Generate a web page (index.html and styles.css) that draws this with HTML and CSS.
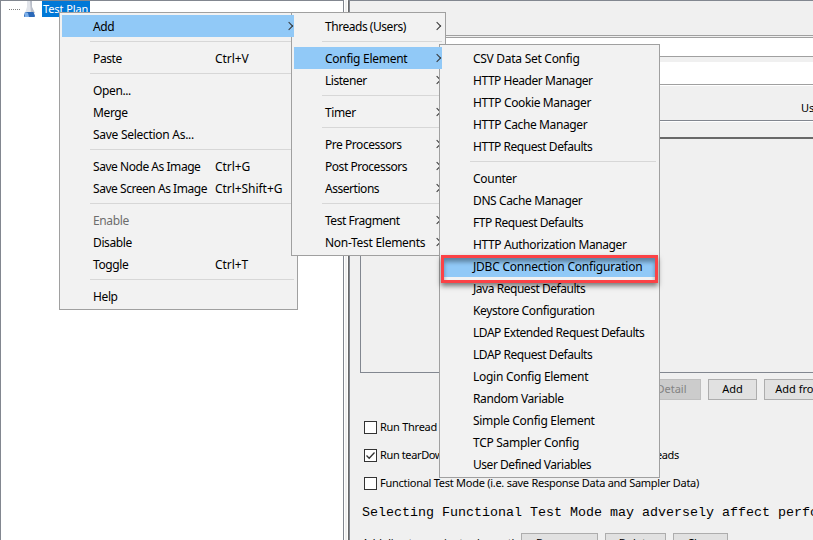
FILE: index.html
```
<!DOCTYPE html>
<html lang="en">
<head>
<meta charset="utf-8">
<title>Test Plan</title>
<link rel="stylesheet" href="styles.css">
</head>
<body>
<div class="app">
  <aside class="tree">
    <div class="node">
      <span class="branch"></span>
      <svg class="flask" width="14" height="17" viewBox="0 0 14 17"><path d="M5 0h5v6l3 9q0 1-1 1H3q-1 0-1-1L5 6z" fill="#e1e4ea"/><path d="M8 0h2v6l3 6H9z" fill="#b9bec9"/><path d="M3 11h8.500l1.500 4q0 1-1 1H3q-1 0-1-1z" fill="#2a68b8"/><path d="M3 11l3 1 1 4H3z" fill="#7db0ea"/></svg>
      <span class="selected">Test Plan</span>
    </div>
  </aside>
  <div class="divider"></div>
  <main class="panel">
    <div class="title-space"></div>
    <div class="field name"></div>
    <div class="field comments"></div>
    <div class="heading">User Defined Variables</div>
    <div class="table"><div class="table-head"></div></div>
    <div class="row-buttons"><button class="disabled">Detail</button><button class="add">Add</button><button class="clip">Add from Clipboard</button></div>
    <div class="checks">
      <label class="check"><i></i><span>Run Thread Groups consecutively</span></label>
      <label class="check"><i><svg width="13" height="13" viewBox="0 0 13 13"><path d="M2.500 6.500 5.200 9.300 10.500 3.500" fill="none" stroke="#333" stroke-width="1.300"/></svg></i><span class="narrow">Run tearDown Thread Groups after shutdown of main threads</span></label>
      <label class="check"><i></i><span>Functional Test Mode (i.e. save Response Data and Sampler Data)</span></label>
    </div>
    <p class="note">Selecting Functional Test Mode may adversely affect performance.</p>
    <div class="classpath"><span>Add directory or jar to classpath</span><button class="browse">Browse...</button><button class="delete">Delete</button><button class="clear">Clear</button></div>
  </main>
</div>

<nav class="menu root">
  <div class="item active"><span>Add</span><b class="arrow"></b></div>
  <hr>
  <div class="item"><span>Paste</span><kbd>Ctrl+V</kbd></div>
  <hr>
  <div class="item"><span>Open...</span></div>
  <div class="item"><span>Merge</span></div>
  <div class="item loose"><span>Save Selection As...</span></div>
  <hr>
  <div class="item tight"><span>Save Node As Image</span><kbd>Ctrl+G</kbd></div>
  <div class="item tight"><span>Save Screen As Image</span><kbd>Ctrl+Shift+G</kbd></div>
  <hr>
  <div class="item off"><span>Enable</span></div>
  <div class="item"><span>Disable</span></div>
  <div class="item"><span>Toggle</span><kbd>Ctrl+T</kbd></div>
  <hr>
  <div class="item"><span>Help</span></div>
</nav>
<nav class="menu add-menu">
  <div class="item tight"><span>Threads (Users)</span><b class="arrow"></b></div>
  <hr>
  <div class="item active loose"><span>Config Element</span><b class="arrow"></b></div>
  <div class="item tight"><span>Listener</span><b class="arrow"></b></div>
  <hr>
  <div class="item"><span>Timer</span><b class="arrow"></b></div>
  <hr>
  <div class="item tight"><span>Pre Processors</span><b class="arrow"></b></div>
  <div class="item tight"><span>Post Processors</span><b class="arrow"></b></div>
  <div class="item tight"><span>Assertions</span><b class="arrow"></b></div>
  <hr>
  <div class="item tight"><span>Test Fragment</span><b class="arrow"></b></div>
  <div class="item loose"><span>Non-Test Elements</span><b class="arrow"></b></div>
</nav>
<nav class="menu config-menu">
  <div class="item loose"><span>CSV Data Set Config</span></div>
  <div class="item tight"><span>HTTP Header Manager</span></div>
  <div class="item"><span>HTTP Cookie Manager</span></div>
  <div class="item"><span>HTTP Cache Manager</span></div>
  <div class="item tight"><span>HTTP Request Defaults</span></div>
  <hr>
  <div class="item loose"><span>Counter</span></div>
  <div class="item"><span>DNS Cache Manager</span></div>
  <div class="item tight"><span>FTP Request Defaults</span></div>
  <div class="item"><span>HTTP Authorization Manager</span></div>
  <div class="item active target"><span>JDBC Connection Configuration</span></div>
  <div class="item tight"><span>Java Request Defaults</span></div>
  <div class="item"><span>Keystore Configuration</span></div>
  <div class="item tight"><span>LDAP Extended Request Defaults</span></div>
  <div class="item tight"><span>LDAP Request Defaults</span></div>
  <div class="item loose"><span>Login Config Element</span></div>
  <div class="item"><span>Random Variable</span></div>
  <div class="item loose"><span>Simple Config Element</span></div>
  <div class="item loose"><span>TCP Sampler Config</span></div>
  <div class="item tight"><span>User Defined Variables</span></div>
</nav>
<div class="callout"></div>
</body>
</html>
```
FILE: styles.css
```
* { box-sizing: border-box; }
body { margin: 0; width: 813px; height: 540px; overflow: hidden; position: relative; background: #f0f0f0; color: #000; font: 11px "Noto Sans", sans-serif; }
.app { display: flex; width: 813px; height: 540px; overflow: hidden; }
.tree { width: 344px; border: 1px solid #828790; border-bottom: 0; background: #fff; }
.node { display: flex; padding-left: 8px; }
.branch { width: 12px; height: 1px; margin-top: 8px; background: repeating-linear-gradient(90deg, #808080 0 1px, transparent 1px 2px); }
.flask { margin-left: 1px; }
.selected { margin-left: 6px; width: 48px; height: 16px; line-height: 16px; padding-left: 1px; background: #0078d7; color: #fff; white-space: nowrap; letter-spacing: -.1px; }
.divider { width: 4px; background: #f0f0f0; border: solid #fff; border-width: 0 1px; }
.panel { position: relative; width: 465px; flex: none; padding-left: 1px; border-left: 1px solid #696969; border-top: 1px solid #828790; box-shadow: inset 1px 0 #828790; overflow: hidden; white-space: nowrap; }
.title-space { height: 35px; border-bottom: 1px solid #a0a0a0; }
.field { background: #fff; border: 1px solid #a0a0a0; border-left: 0; border-right: 0; }
.name { height: 20px; margin-top: 1px; }
.comments { height: 23px; margin-top: 5px; border-top: 0; }
.heading { height: 35px; padding: 15px 0 0 451px; line-height: 16px; box-shadow: inset 0 1px #fff; }
.table { height: 253px; margin-left: 10px; border: 1px solid #828790; border-right: 0; }
.table-head { height: 18px; border-top: 1px solid #fff; border-bottom: 2px solid #696969; }
button { flex: none; height: 21px; padding: 0 0 2px; border: 1px solid #adadad; background: #e1e1e1; font: inherit; color: #000; }
.row-buttons { display: flex; gap: 7px; margin: 6px 0 0 292px; }
.row-buttons .disabled { width: 59px; background: #ccc; border-color: #bfbfbf; color: #838383; }
.row-buttons .add { width: 49px; }
.row-buttons .clip { width: 124px; }
.checks { margin: 13px 0 0 14px; letter-spacing: -.27px; }
.check { display: flex; height: 28px; align-items: center; }
.check i { flex: none; width: 13px; height: 13px; border: 1px solid #333; background: #fff; margin-right: 3px; }
.check span { padding-bottom: 2px; }
.check .narrow { letter-spacing: -.38px; }
.check svg { display: block; margin: -1px; }
.note { margin: 7px 0 0 12px; font: 13.333px/18px "Liberation Mono", monospace; }
.classpath { display: flex; gap: 7px; margin: 11px 0 0 12px; }
.classpath span { width: 152px; line-height: 19px; letter-spacing: -.27px; }
.classpath button { line-height: 14px; padding-bottom: 2px; }
.classpath .browse { width: 77px; }
.classpath .delete { width: 61px; }
.classpath .clear { width: 55px; }

.menu { position: absolute; padding: 2px; border: 1px solid #a0a0a0; background: #f2f2f2; font-size: 12px; }
.root { left: 59px; top: 12px; width: 239px; }
.add-menu { left: 291px; top: 12px; width: 155px; }
.config-menu { left: 439px; top: 44px; width: 221px; }
.menu hr { height: 1px; margin: 4px 1px 5px 28px; border: 0; background: #d7d7d7; }
.item { display: flex; height: 22px; padding-left: 31px; line-height: 24px; white-space: nowrap; letter-spacing: -.38px; }
.item.loose { letter-spacing: -.28px; }
.item.tight { letter-spacing: -.46px; }
.item.target { letter-spacing: -.22px; }
.root .item span { width: 122px; }
.item kbd { font: inherit; letter-spacing: -.05px; }
.item.off { color: #6d6d6d; }
.item.active { position: relative; z-index: 1; margin-right: 1px; background: #91c9f7; }
.item.active .arrow { margin-right: 2px; }
.arrow { width: 6px; height: 6px; margin: 8px 3px 0 auto; border: solid #333; border-width: 1px 1px 0 0; transform: rotate(45deg); }
.callout { position: absolute; z-index: 2; left: 441px; top: 255px; width: 217px; height: 28px; border: 3px solid #fb4246; box-shadow: 0 3px 5px rgba(0,0,0,.5), inset 0 4px 4px rgba(0,0,0,.35); }
```
